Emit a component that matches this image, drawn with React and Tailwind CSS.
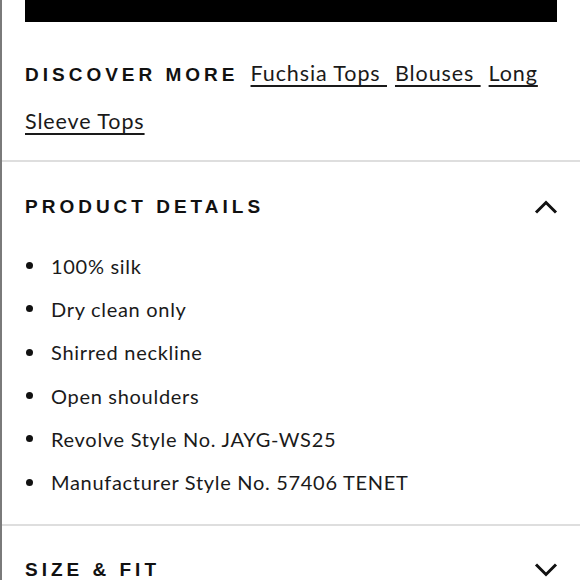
export default function App() {
  const items = [
    "100% silk",
    "Dry clean only",
    "Shirred neckline",
    "Open shoulders",
    "Revolve Style No. JAYG-WS25",
    "Manufacturer Style No. 57406 TENET",
  ];
  const head = "font-bold text-[19px] tracking-[4px] text-[#111] font-['Liberation_Sans',sans-serif]";
  const body = "font-['Lato',sans-serif] text-[20px] tracking-[0.7px] text-[#1a1a1a]";
  const link = "leading-none text-[21.5px] tracking-[0.9px] underline underline-offset-[4px] decoration-[1.5px]";
  return (
    <div className="w-[580px] h-[580px] overflow-hidden bg-white border-l-2 border-[#7a7a7a]">
      <div className="px-[23px]">
        <div className="h-[22px] bg-black" />
        <p className={`pt-[27px] pb-[15px] leading-[48px] ${body}`}>
          <span className={`${head} leading-none mr-[12px]`}>DISCOVER MORE</span>
          <span className={link}>Fuchsia Tops </span>
          <span className={`ml-[8px] ${link}`}>Blouses </span>
          <span className={`ml-[8px] ${link}`}>Long Sleeve Tops</span>
        </p>
      </div>
      <div className="h-[2px] bg-[#dedede]" />
      <div className="px-[23px] pt-[33px] pb-[20px]">
        <div className="flex items-center justify-between h-[24px]">
          <span className={head}>PRODUCT DETAILS</span>
          <svg width="24" height="14" viewBox="0 0 24 14" className="mr-[-1px]">
            <path d="M2 12.5 L12 2.5 L22 12.5" fill="none" stroke="#111" strokeWidth="3" />
          </svg>
        </div>
        <ul className={`mt-[25px] ${body}`}>
          {items.map((t) => (
            <li key={t} className="flex items-center h-[43.3px]">
              <span className="w-[7px] h-[7px] rounded-full bg-[#111] ml-[1px] mr-[18px]" />
              <span>{t}</span>
            </li>
          ))}
        </ul>
      </div>
      <div className="h-[2px] bg-[#dedede]" />
      <div className="px-[23px] pt-[32px]">
        <div className="flex items-center justify-between h-[24px]">
          <span className={head}>SIZE &amp; FIT</span>
          <svg width="24" height="14" viewBox="0 0 24 14" className="mr-[-1px]">
            <path d="M2 1.5 L12 11.5 L22 1.5" fill="none" stroke="#111" strokeWidth="3" />
          </svg>
        </div>
      </div>
    </div>
  );
}
